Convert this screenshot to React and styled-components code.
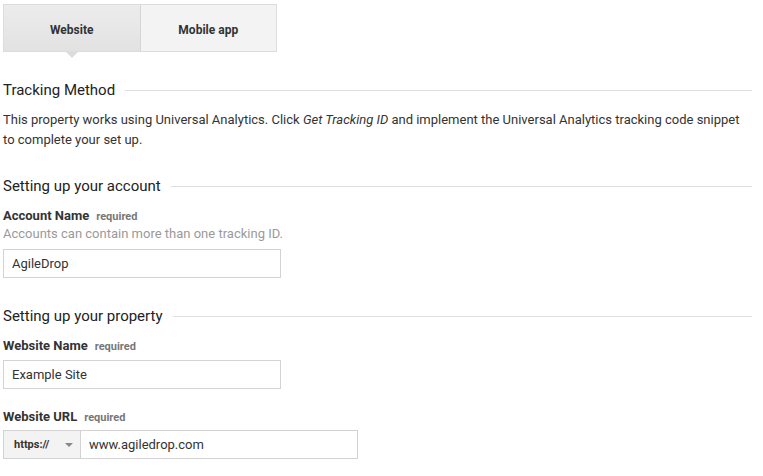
import React from "react";
import styled, { createGlobalStyle } from "styled-components";

const GlobalStyle = createGlobalStyle`
  body {
    margin: 0;
    background: #fff;
    font-family: Roboto, "Liberation Sans", Arial, sans-serif;
    color: #222;
  }
`;

const Page = styled.div`
  width: 749px;
  padding: 4px 0 0 3px;
`;

const Tabs = styled.div`
  display: flex;
  width: 274px;
  height: 48px;
  border: 1px solid #dcdcdc;
  box-sizing: border-box;
`;

const Tab = styled.div`
  position: relative;
  flex: 1;
  display: flex;
  align-items: center;
  justify-content: center;
  padding-top: 3px;
  font-size: 12px;
  font-weight: 700;
  color: #333;
  background: ${(p) => (p.active ? "linear-gradient(#ececec, #e2e2e2)" : "#f3f3f3")};
  border-right: ${(p) => (p.active ? "1px solid #d6d6d6" : "none")};

  ${(p) =>
    p.active &&
    `
    &::after {
      content: "";
      position: absolute;
      left: 50%;
      bottom: -7px;
      margin-left: -6px;
      border-left: 6px solid transparent;
      border-right: 6px solid transparent;
      border-top: 6px solid #dcdcdc;
    }
  `}
`;

const Section = styled.div`
  margin-top: ${(p) => p.top || 0}px;
`;

const Heading = styled.div`
  display: flex;
  align-items: center;
  gap: 10px;
  font-size: 15px;
  line-height: 20px;
  color: #222;

  &::after {
    content: "";
    flex: 1;
    height: 1px;
    background: #e0e0e0;
    margin-top: 1px;
  }
`;

const Text = styled.p`
  margin: 10px 0 0;
  font-size: 13px;
  line-height: 20px;
  color: #333;

  em {
    font-style: italic;
  }
`;

const Label = styled.div`
  margin-top: ${(p) => p.top || 11}px;
  font-size: 13px;
  font-weight: 700;
  line-height: 17px;
  color: #333;

  span {
    margin-left: 7px;
    font-size: 11px;
    color: #777;
  }
`;

const Hint = styled.div`
  font-size: 13px;
  line-height: 18px;
  color: #9a9a9a;
`;

const Input = styled.div`
  box-sizing: border-box;
  width: ${(p) => p.w || 278}px;
  height: 29px;
  margin-top: ${(p) => p.top || 6}px;
  border: 1px solid #d3d3d3;
  padding: 0 8px;
  display: flex;
  align-items: center;
  font-size: 13px;
  color: #333;
`;

const UrlRow = styled.div`
  display: flex;
  margin-top: 4px;
  width: 355px;
  height: 29px;
  box-sizing: border-box;
  border: 1px solid #d3d3d3;
`;

const Select = styled.div`
  width: 77px;
  box-sizing: border-box;
  background: #f3f3f3;
  border-right: 1px solid #d3d3d3;
  display: flex;
  align-items: center;
  padding: 0 0 0 10px;
  font-size: 11px;
  font-weight: 700;
  color: #333;
  gap: 16px;

  &::after {
    content: "";
    border-left: 4px solid transparent;
    border-right: 4px solid transparent;
    border-top: 4px solid #888;
  }
`;

const UrlInput = styled.div`
  flex: 1;
  display: flex;
  align-items: center;
  padding: 0 8px;
  font-size: 13px;
  color: #333;
`;

export default function App() {
  return (
    <Page>
      <GlobalStyle />
      <Tabs>
        <Tab active>Website</Tab>
        <Tab>Mobile app</Tab>
      </Tabs>

      <Section top={28}>
        <Heading>Tracking Method</Heading>
        <Text>
          This property works using Universal Analytics. Click <em>Get Tracking ID</em> and
          implement the Universal Analytics tracking code snippet to complete your set up.
        </Text>
      </Section>

      <Section top={26}>
        <Heading>Setting up your account</Heading>
        <Label>
          Account Name<span>required</span>
        </Label>
        <Hint>Accounts can contain more than one tracking ID.</Hint>
        <Input>AgileDrop</Input>
      </Section>

      <Section top={28}>
        <Heading>Setting up your property</Heading>
        <Label>
          Website Name<span>required</span>
        </Label>
        <Input top={5}>Example Site</Input>
        <Label top={19}>
          Website URL<span>required</span>
        </Label>
        <UrlRow>
          <Select>https://</Select>
          <UrlInput>www.agiledrop.com</UrlInput>
        </UrlRow>
      </Section>
    </Page>
  );
}
